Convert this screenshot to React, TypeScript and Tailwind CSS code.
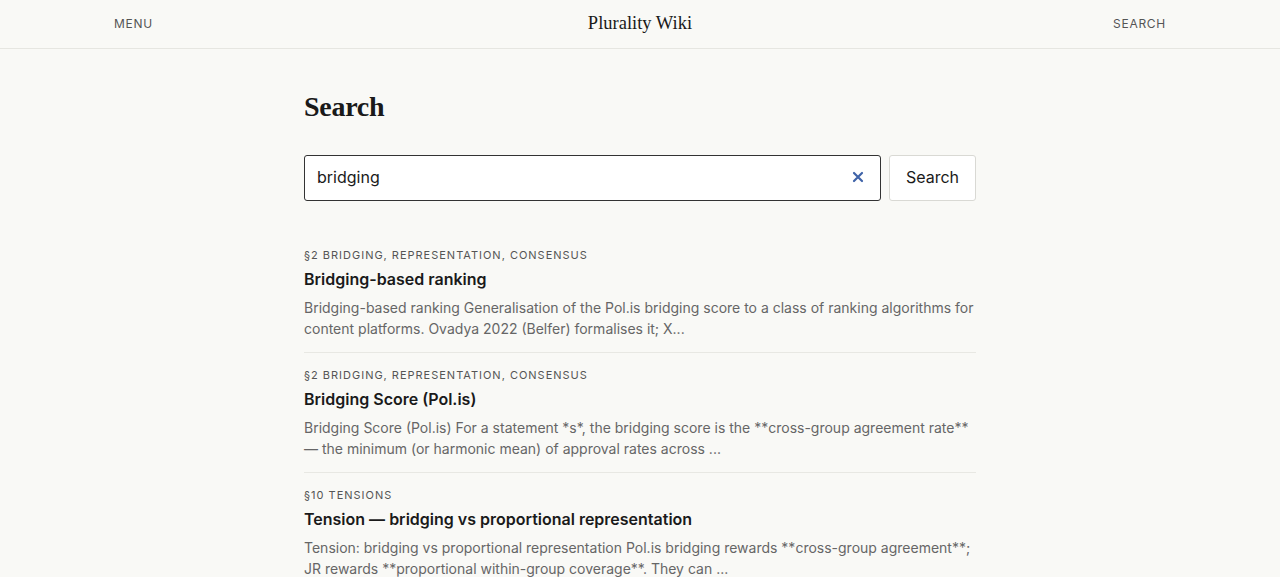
import React, { useState } from 'react';

type Result = {
  section: string;
  title: string;
  snippet: string;
};

const RESULTS: Result[] = [
  {
    section: '§2 Bridging, representation, consensus',
    title: 'Bridging-based ranking',
    snippet:
      'Bridging-based ranking Generalisation of the Pol.is bridging score to a class of ranking algorithms for content platforms. Ovadya 2022 (Belfer) formalises it; X...',
  },
  {
    section: '§2 Bridging, representation, consensus',
    title: 'Bridging Score (Pol.is)',
    snippet:
      'Bridging Score (Pol.is) For a statement *s*, the bridging score is the **cross-group agreement rate** — the minimum (or harmonic mean) of approval rates across ...',
  },
  {
    section: '§10 Tensions',
    title: 'Tension — bridging vs proportional representation',
    snippet:
      'Tension: bridging vs proportional representation Pol.is bridging rewards **cross-group agreement**; JR rewards **proportional within-group coverage**. They can ...',
  },
];

const App: React.FC = () => {
  const [query, setQuery] = useState('bridging');

  return (
    <div className="min-h-screen bg-[#f9f9f6] text-[#1a1a1a] font-['Inter',sans-serif]">
      <header className="h-[49px] border-b border-[#e6e6e1] px-[114px] grid grid-cols-3 items-center">
        <button className="justify-self-start text-[12px] tracking-[0.06em] text-[#555]">MENU</button>
        <div className="justify-self-center font-['Liberation_Serif',serif] text-[18.5px] text-[#1a1a1a]">Plurality Wiki</div>
        <button className="justify-self-end text-[12px] tracking-[0.06em] text-[#555]">SEARCH</button>
      </header>

      <main className="max-w-[672px] mx-auto pt-10">
        <h1 className="font-['Liberation_Serif',serif] text-[28px] leading-9 font-semibold text-[#1a1a1a] tracking-[-0.01em]">
          Search
        </h1>

        <div className="mt-[30px] flex gap-2">
          <div className="flex-1 h-[46px] bg-white border border-[#333] rounded-[3px] flex items-center pl-3 pr-3 pb-[2px]">
            <input
              className="flex-1 outline-none bg-transparent text-[16px] leading-5 text-[#1a1a1a]"
              value={query}
              onChange={e => setQuery(e.target.value)}
            />
            <button onClick={() => setQuery('')} className="w-5 h-5 flex items-center justify-center text-[#3f63a8]">
              <svg width="12" height="12" viewBox="0 0 12 12" fill="none">
                <path d="M2 2L10 10M10 2L2 10" stroke="currentColor" strokeWidth="2.2" strokeLinecap="round" />
              </svg>
            </button>
          </div>
          <button className="w-[87px] h-[46px] bg-white border border-[#d9d9d4] rounded-[3px] text-[16px] text-[#1a1a1a] pb-[2px]">
            Search
          </button>
        </div>

        <ul className="mt-[32px]">
          {RESULTS.map((r, i) => (
            <li
              key={r.title}
              className={`pt-3.5 pb-[13px] ${i < RESULTS.length - 1 ? 'border-b border-[#e8e8e3]' : ''}`}
            >
              <div className="text-[11px] leading-4 uppercase tracking-[0.09em] text-[#555]">{r.section}</div>
              <div className="mt-1 text-[16px] leading-6 font-semibold text-[#1a1a1a]">{r.title}</div>
              <p className="mt-1.5 text-[14px] leading-[21px] text-[#666]">{r.snippet}</p>
            </li>
          ))}
        </ul>
      </main>
    </div>
  );
};

export default App;
